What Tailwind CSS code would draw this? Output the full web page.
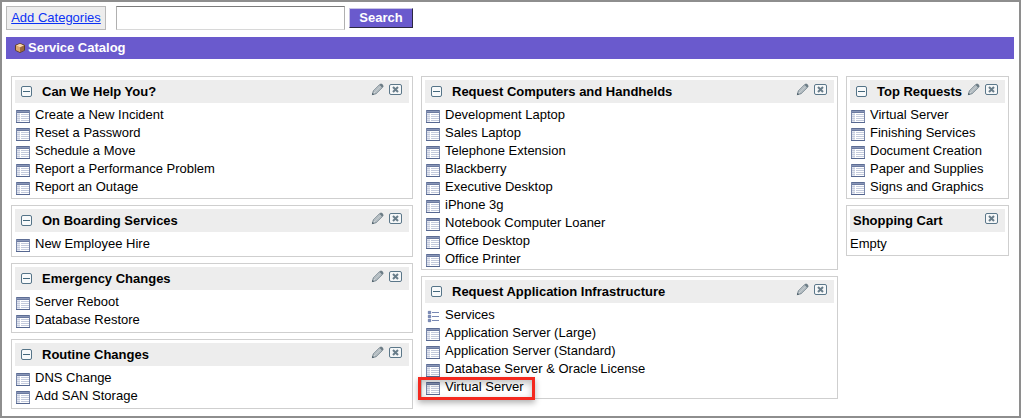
<!DOCTYPE html>
<html lang="en">
<head>
<meta charset="utf-8">
<title>Service Catalog</title>
<script src="https://cdn.jsdelivr.net/npm/@tailwindcss/browser@4"></script>
</head>
<body class="min-h-screen flex flex-col bg-white border-2 border-[#8e8e8e] pl-1 pr-[5px] pt-1 pb-1 text-[13px] leading-[18px] text-black font-['Liberation_Sans',Arial,sans-serif]">

<svg class="hidden" aria-hidden="true">
  <symbol id="minus" viewBox="0 0 11 11"><rect x=".5" y=".5" width="10" height="10" rx="1.5" fill="#f8fafb" stroke="#557488"/><path d="M2 5.5h7" stroke="#44687c"/></symbol>
  <symbol id="table" viewBox="0 0 14 13">
    <path fill="#fff" d="M0 0h14v13H0z"/>
    <path fill="#e3e7f1" d="M1 3h3v9H1z"/>
    <path fill="#8a97b8" d="M0 0h14v3H0z"/><path fill="#5d6d94" d="M0 0h14v1H0z"/><path fill="#6b7aa0" d="M0 2h14v1H0z"/>
    <path d="M1 4.500h12M1 6.500h12M1 8.500h12M1 10.500h12" stroke="#c3cadc"/>
    <path d="M4.500 3v9" stroke="#fff"/><path d="M.5 0v13M13.500 0v13" stroke="#7886a9"/><path d="M0 12.500h14" stroke="#566790"/>
  </symbol>
  <symbol id="list" viewBox="0 0 14 13"><path fill="#7c8cb8" stroke="#52659a" stroke-width=".6" d="M2.300 1.300h2.400v2.400H2.300zM2.300 5.300h2.400v2.400H2.300zM2.300 9.300h2.400v2.400H2.300z"/><path d="M6 2.500h7M6 6.500h7M6 10.500h7" stroke="#7888b3"/></symbol>
  <symbol id="pencil" viewBox="0 0 13 13"><path d="M1.500 11.500l.8-3.500L8.500 1.800Q10 .4 11.300 1.700T11.400 4.400L5 10.700z" fill="#cfd5d8" stroke="#71818b"/><path d="M3.300 9l6.200-6.200M4.300 10l6.200-6.200" stroke="#93a0a7" stroke-width=".7"/><path d="M8.300 1.800l2.900 2.900 1-1.200-.3-1.600L10.500.8z" fill="#6c7c86"/><path d="M.8 12.200l.6-2.400 1.800 1.800z" fill="#54656f"/></symbol>
  <symbol id="close" viewBox="0 0 13 11"><rect x=".5" y=".5" width="12" height="10" rx="1.500" fill="#f5f7f8" stroke="#5b7789"/><path d="M4 3l5 5M9 3l-5 5" stroke="#687d8a" stroke-width="2"/></symbol>
</svg>

<form class="flex items-center" onsubmit="return false">
  <a href="#" class="h-6 px-[3px] leading-[22px] border border-[#b9b9b9] bg-[#ededed] text-[#0b32f4] underline whitespace-nowrap min-w-[100px] text-center">Add Categories</a>
  <input type="text" aria-label="Search catalog" class="ml-[10px] h-6 w-[229px] px-1 border border-t-[#7b7b7b] border-x-[#b0b0b0] border-b-[#d8d8d8] bg-white">
  <button class="ml-1 h-5 w-16 leading-[18px] border border-t-[#c8c4e4] border-l-[#c8c4e4] border-r-[#2c2840] border-b-[#2c2840] bg-[#6a5acd] text-white font-bold">Search</button>
</form>

<h1 class="mt-[7px] h-[22px] flex items-center pl-[9px] gap-[3px] bg-[#6a5acd] text-white font-bold">
  <svg class="w-[10px] h-[10px]" viewBox="0 0 10 10" aria-hidden="true"><path d="M5 .5l4.500 1.800v5L5 9.500.5 7.300v-5z" fill="#c88d4b" stroke="#5b3d2a"/><path d="M5 .8l4 1.700-4 2-4-2z" fill="#f6d6ae"/><path d="M1 2.600l4 2V9L1 7z" fill="#dda66e"/><path d="M9 2.600l-4 2V9l4-2z" fill="#9c6a3e"/></svg>
  Service Catalog
</h1>

<main class="mt-[17px] px-[5px] grid grid-cols-[402fr_417fr_163fr] gap-2 items-start whitespace-nowrap">
  <div class="flex flex-col gap-[6px] min-w-0">
    <section class="border border-[#cfcfcf] p-[3px] pb-[2px]">
      <header class="h-[23px] flex items-center bg-[#ededed] pl-[6px] pr-[7px]">
        <button aria-label="Collapse"><svg class="w-[11px] h-[11px]"><use href="#minus"/></svg></button>
        <h2 class="ml-[10px] font-bold">Can We Help You?</h2>
        <div class="ml-auto self-start pt-[3px] flex items-start gap-[5px]"><button aria-label="Edit"><svg class="w-[13px] h-[13px]"><use href="#pencil"/></svg></button><button aria-label="Close"><svg class="w-[13px] h-[11px] mt-px"><use href="#close"/></svg></button></div>
      </header>
      <ul class="pt-[3px] pl-px">
        <li><a href="#" class="flex gap-[5px]"><svg class="w-[14px] h-[13px] mt-1"><use href="#table"/></svg>Create a New Incident</a></li>
        <li><a href="#" class="flex gap-[5px]"><svg class="w-[14px] h-[13px] mt-1"><use href="#table"/></svg>Reset a Password</a></li>
        <li><a href="#" class="flex gap-[5px]"><svg class="w-[14px] h-[13px] mt-1"><use href="#table"/></svg>Schedule a Move</a></li>
        <li><a href="#" class="flex gap-[5px]"><svg class="w-[14px] h-[13px] mt-1"><use href="#table"/></svg>Report a Performance Problem</a></li>
        <li><a href="#" class="flex gap-[5px]"><svg class="w-[14px] h-[13px] mt-1"><use href="#table"/></svg>Report an Outage</a></li>
      </ul>
    </section>
    <section class="border border-[#cfcfcf] p-[3px]">
      <header class="h-[23px] flex items-center bg-[#ededed] pl-[6px] pr-[7px]">
        <button aria-label="Collapse"><svg class="w-[11px] h-[11px]"><use href="#minus"/></svg></button>
        <h2 class="ml-[10px] font-bold">On Boarding Services</h2>
        <div class="ml-auto self-start pt-[3px] flex items-start gap-[5px]"><button aria-label="Edit"><svg class="w-[13px] h-[13px]"><use href="#pencil"/></svg></button><button aria-label="Close"><svg class="w-[13px] h-[11px] mt-px"><use href="#close"/></svg></button></div>
      </header>
      <ul class="pt-[3px] pl-px">
        <li><a href="#" class="flex gap-[5px]"><svg class="w-[14px] h-[13px] mt-1"><use href="#table"/></svg>New Employee Hire</a></li>
      </ul>
    </section>
    <section class="border border-[#cfcfcf] p-[3px]">
      <header class="h-[23px] flex items-center bg-[#ededed] pl-[6px] pr-[7px]">
        <button aria-label="Collapse"><svg class="w-[11px] h-[11px]"><use href="#minus"/></svg></button>
        <h2 class="ml-[10px] font-bold">Emergency Changes</h2>
        <div class="ml-auto self-start pt-[3px] flex items-start gap-[5px]"><button aria-label="Edit"><svg class="w-[13px] h-[13px]"><use href="#pencil"/></svg></button><button aria-label="Close"><svg class="w-[13px] h-[11px] mt-px"><use href="#close"/></svg></button></div>
      </header>
      <ul class="pt-[3px] pl-px">
        <li><a href="#" class="flex gap-[5px]"><svg class="w-[14px] h-[13px] mt-1"><use href="#table"/></svg>Server Reboot</a></li>
        <li><a href="#" class="flex gap-[5px]"><svg class="w-[14px] h-[13px] mt-1"><use href="#table"/></svg>Database Restore</a></li>
      </ul>
    </section>
    <section class="border border-[#cfcfcf] p-[3px]">
      <header class="h-[23px] flex items-center bg-[#ededed] pl-[6px] pr-[7px]">
        <button aria-label="Collapse"><svg class="w-[11px] h-[11px]"><use href="#minus"/></svg></button>
        <h2 class="ml-[10px] font-bold">Routine Changes</h2>
        <div class="ml-auto self-start pt-[3px] flex items-start gap-[5px]"><button aria-label="Edit"><svg class="w-[13px] h-[13px]"><use href="#pencil"/></svg></button><button aria-label="Close"><svg class="w-[13px] h-[11px] mt-px"><use href="#close"/></svg></button></div>
      </header>
      <ul class="pt-[3px] pl-px">
        <li><a href="#" class="flex gap-[5px]"><svg class="w-[14px] h-[13px] mt-1"><use href="#table"/></svg>DNS Change</a></li>
        <li><a href="#" class="flex gap-[5px]"><svg class="w-[14px] h-[13px] mt-1"><use href="#table"/></svg>Add SAN Storage</a></li>
      </ul>
    </section>
  </div>

  <div class="flex flex-col gap-[6px] min-w-0">
    <section class="border border-[#cfcfcf] p-[3px] pb-px">
      <header class="h-[23px] flex items-center bg-[#ededed] pl-[6px] pr-[7px]">
        <button aria-label="Collapse"><svg class="w-[11px] h-[11px]"><use href="#minus"/></svg></button>
        <h2 class="ml-[10px] font-bold">Request Computers and Handhelds</h2>
        <div class="ml-auto self-start pt-[3px] flex items-start gap-[5px]"><button aria-label="Edit"><svg class="w-[13px] h-[13px]"><use href="#pencil"/></svg></button><button aria-label="Close"><svg class="w-[13px] h-[11px] mt-px"><use href="#close"/></svg></button></div>
      </header>
      <ul class="pt-[3px] pl-px">
        <li><a href="#" class="flex gap-[5px]"><svg class="w-[14px] h-[13px] mt-1"><use href="#table"/></svg>Development Laptop</a></li>
        <li><a href="#" class="flex gap-[5px]"><svg class="w-[14px] h-[13px] mt-1"><use href="#table"/></svg>Sales Laptop</a></li>
        <li><a href="#" class="flex gap-[5px]"><svg class="w-[14px] h-[13px] mt-1"><use href="#table"/></svg>Telephone Extension</a></li>
        <li><a href="#" class="flex gap-[5px]"><svg class="w-[14px] h-[13px] mt-1"><use href="#table"/></svg>Blackberry</a></li>
        <li><a href="#" class="flex gap-[5px]"><svg class="w-[14px] h-[13px] mt-1"><use href="#table"/></svg>Executive Desktop</a></li>
        <li><a href="#" class="flex gap-[5px]"><svg class="w-[14px] h-[13px] mt-1"><use href="#table"/></svg>iPhone 3g</a></li>
        <li><a href="#" class="flex gap-[5px]"><svg class="w-[14px] h-[13px] mt-1"><use href="#table"/></svg>Notebook Computer Loaner</a></li>
        <li><a href="#" class="flex gap-[5px]"><svg class="w-[14px] h-[13px] mt-1"><use href="#table"/></svg>Office Desktop</a></li>
        <li><a href="#" class="flex gap-[5px]"><svg class="w-[14px] h-[13px] mt-1"><use href="#table"/></svg>Office Printer</a></li>
      </ul>
    </section>
    <section class="border border-[#cfcfcf] p-[3px] pb-[2px]">
      <header class="h-[23px] flex items-center bg-[#ededed] pl-[6px] pr-[7px]">
        <button aria-label="Collapse"><svg class="w-[11px] h-[11px]"><use href="#minus"/></svg></button>
        <h2 class="ml-[10px] font-bold">Request Application Infrastructure</h2>
        <div class="ml-auto self-start pt-[3px] flex items-start gap-[5px]"><button aria-label="Edit"><svg class="w-[13px] h-[13px]"><use href="#pencil"/></svg></button><button aria-label="Close"><svg class="w-[13px] h-[11px] mt-px"><use href="#close"/></svg></button></div>
      </header>
      <ul class="pt-[3px] pl-px">
        <li><a href="#" class="flex gap-[5px]"><svg class="w-[14px] h-[13px] mt-1"><use href="#list"/></svg>Services</a></li>
        <li><a href="#" class="flex gap-[5px]"><svg class="w-[14px] h-[13px] mt-1"><use href="#table"/></svg>Application Server (Large)</a></li>
        <li><a href="#" class="flex gap-[5px]"><svg class="w-[14px] h-[13px] mt-1"><use href="#table"/></svg>Application Server (Standard)</a></li>
        <li><a href="#" class="flex gap-[5px]"><svg class="w-[14px] h-[13px] mt-1"><use href="#table"/></svg>Database Server &amp; Oracle License</a></li>
        <li class="relative w-fit">
          <a href="#" class="flex gap-[5px]"><svg class="w-[14px] h-[13px] mt-1"><use href="#table"/></svg>Virtual Server</a>
          <!-- Callout frame around the highlighted request -->
          <span class="absolute -left-2 -right-[11px] -top-px -bottom-1 border-[3px] border-[#f4291f] shadow-[0_3px_6px_rgba(0,0,0,0.3),inset_0_3px_7px_rgba(0,0,0,0.25)] pointer-events-none"></span>
        </li>
      </ul>
    </section>
  </div>

  <div class="flex flex-col gap-[6px] min-w-0">
    <section class="border border-[#cfcfcf] p-[3px] pb-[2px]">
      <header class="h-[23px] flex items-center bg-[#ededed] pl-[6px] pr-[7px]">
        <button aria-label="Collapse"><svg class="w-[11px] h-[11px]"><use href="#minus"/></svg></button>
        <h2 class="ml-[10px] font-bold">Top Requests</h2>
        <div class="ml-auto self-start pt-[3px] flex items-start gap-[5px]"><button aria-label="Edit"><svg class="w-[13px] h-[13px]"><use href="#pencil"/></svg></button><button aria-label="Close"><svg class="w-[13px] h-[11px] mt-px"><use href="#close"/></svg></button></div>
      </header>
      <ul class="pt-[3px] pl-px">
        <li><a href="#" class="flex gap-[5px]"><svg class="w-[14px] h-[13px] mt-1"><use href="#table"/></svg>Virtual Server</a></li>
        <li><a href="#" class="flex gap-[5px]"><svg class="w-[14px] h-[13px] mt-1"><use href="#table"/></svg>Finishing Services</a></li>
        <li><a href="#" class="flex gap-[5px]"><svg class="w-[14px] h-[13px] mt-1"><use href="#table"/></svg>Document Creation</a></li>
        <li><a href="#" class="flex gap-[5px]"><svg class="w-[14px] h-[13px] mt-1"><use href="#table"/></svg>Paper and Supplies</a></li>
        <li><a href="#" class="flex gap-[5px]"><svg class="w-[14px] h-[13px] mt-1"><use href="#table"/></svg>Signs and Graphics</a></li>
      </ul>
    </section>
    <section class="border border-[#cfcfcf] p-[3px] pb-[2px]">
      <header class="h-[23px] flex items-center bg-[#ededed] pl-[3px] pr-[7px]">
        <h2 class="font-bold">Shopping Cart</h2>
        <div class="ml-auto self-start pt-[3px] flex items-start"><button aria-label="Close"><svg class="w-[13px] h-[11px] mt-px"><use href="#close"/></svg></button></div>
      </header>
      <p class="pt-[3px]">Empty</p>
    </section>
  </div>
</main>
</body>
</html>
